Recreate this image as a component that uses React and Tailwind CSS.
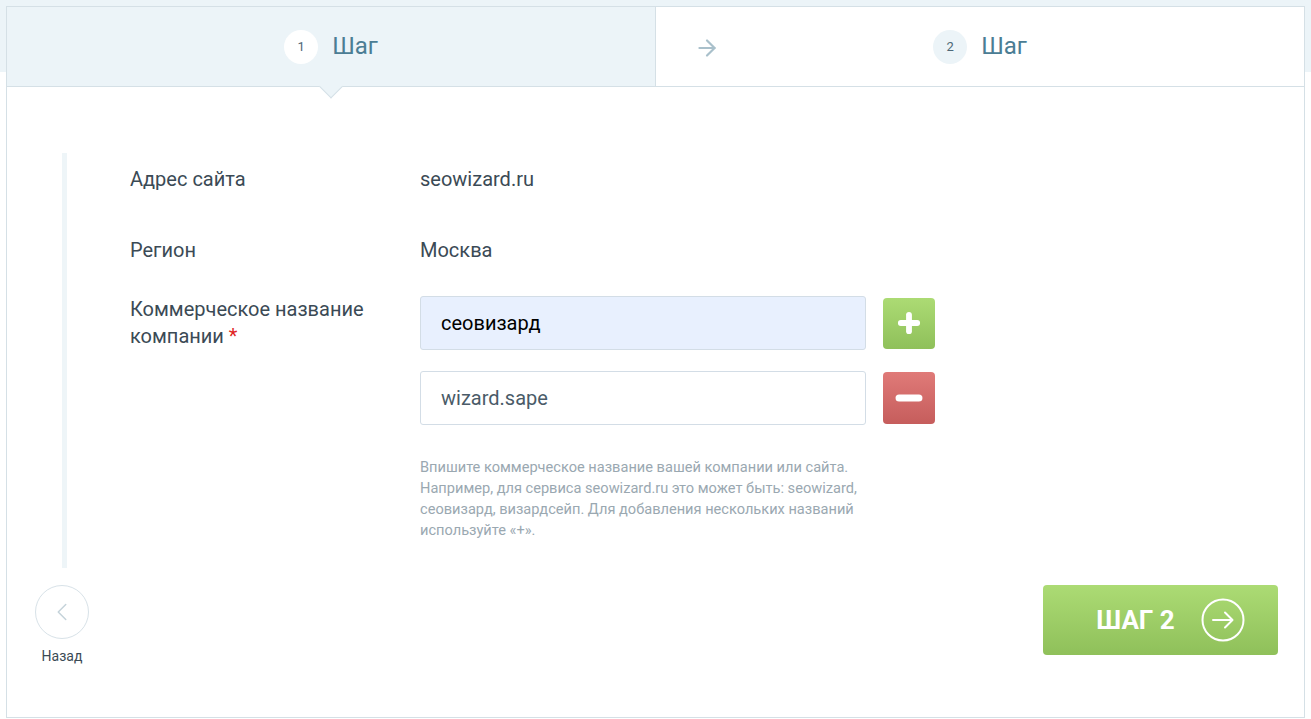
import { ArrowRight, ChevronLeft, Plus, Minus } from 'lucide-react';

const font = { fontFamily: 'Roboto, "Noto Sans", sans-serif' };

function StepTab({ num, active, arrow }) {
  return (
    <div
      className={`relative flex-1 flex items-center justify-center gap-[14px] ${
        active ? 'bg-[#ecf4f8]' : 'bg-white border-l border-[#d5e0e6]'
      }`}
    >
      {arrow && (
        <ArrowRight size={26} strokeWidth={2} className="absolute left-[38px] top-[28px] text-[#a9c0cb]" />
      )}
      <div
        className={`w-[34px] h-[34px] rounded-full flex items-center justify-center text-[13px] text-[#4d6877] ${
          active ? 'bg-white' : 'bg-[#ecf4f8]'
        }`}
      >
        {num}
      </div>
      <span className="text-[24px] text-[#4b7d94] leading-none pb-[1px]">Шаг</span>
      {active && (
        <div className="absolute left-1/2 -bottom-[9px] -translate-x-1/2 w-[17px] h-[17px] rotate-45 bg-[#ecf4f8] border-r border-b border-[#d5e0e6]" />
      )}
    </div>
  );
}

function Row({ label, children }) {
  return (
    <div className="flex items-center h-[52px]">
      <div className="w-[290px] text-[20px] leading-[27px] text-[#3b4a55]">{label}</div>
      <div className="text-[20px] text-[#3b4a55]">{children}</div>
    </div>
  );
}

export default function App() {
  return (
    <div
      style={font}
      className="min-h-[719px] pt-[6px] px-[6px] bg-[linear-gradient(to_bottom,#ecf4f8_72px,#ffffff_72px)]"
    >
      <div className="h-[712px] bg-white border border-[#d5e0e6] flex flex-col">
        <div className="h-[80px] flex border-b border-[#d5e0e6]">
          <StepTab num="1" active />
          <StepTab num="2" arrow />
        </div>

        <div className="mt-[66px] ml-[55px] h-[415px] border-l-[5px] border-[#eef5f8] pl-[63px]">
          <Row label="Адрес сайта">seowizard.ru</Row>
          <div className="mt-[19px]">
            <Row label="Регион">Москва</Row>
          </div>
          <div className="mt-[20px] flex items-start">
            <div className="w-[290px] text-[20px] leading-[27px] text-[#3b4a55]">
              Коммерческое название
              <br />
              компании <span className="text-[#e02424]">*</span>
            </div>
            <div className="flex flex-col">
              <div className="flex items-center gap-[17px]">
                <input
                  readOnly
                  value="сеовизард"
                  className="w-[446px] h-[54px] rounded-[3px] border border-[#d3dde6] bg-[#e8f0fe] px-[20px] text-[20px] text-black outline-none"
                />
                <button className="w-[52px] h-[51px] rounded-[4px] bg-[linear-gradient(to_bottom,#acdb74,#8fc05a)] flex items-center justify-center">
                  <Plus size={28} strokeWidth={5} className="text-white" />
                </button>
              </div>
              <div className="flex items-center gap-[17px] mt-[21px]">
                <input
                  readOnly
                  value="wizard.sape"
                  className="w-[446px] h-[54px] rounded-[3px] border border-[#d3dde6] bg-white px-[20px] text-[20px] text-[#4a5b68] outline-none"
                />
                <button className="w-[52px] h-[52px] rounded-[4px] bg-[linear-gradient(to_bottom,#e07a78,#c65d5c)] flex items-center justify-center">
                  <Minus size={34} strokeWidth={5} className="text-white" />
                </button>
              </div>
              <p className="mt-[32px] w-[480px] text-[14.6px] leading-[21px] text-[#9aa8b1]">
                Впишите коммерческое название вашей компании или сайта.
                <br />
                Например, для сервиса seowizard.ru это может быть: seowizard,
                <br />
                сеовизард, визардсейп. Для добавления нескольких названий
                <br />
                используйте «+».
              </p>
            </div>
          </div>
        </div>

        <div className="mt-[17px] flex justify-between items-start pl-[28px] pr-[26px]">
          <div className="flex flex-col items-center w-[54px]">
            <div className="w-[54px] h-[54px] rounded-full border border-[#d8e2e8] flex items-center justify-center">
              <ChevronLeft size={30} strokeWidth={1.2} className="text-[#c5d3da]" />
            </div>
            <span className="mt-[7px] text-[14px] text-[#3b4a55]">Назад</span>
          </div>
          <button className="w-[235px] h-[70px] rounded-[4px] bg-[linear-gradient(to_bottom,#acdb74,#8fc05a)] flex items-center justify-center gap-[26px] pl-[20px]">
            <span className="text-[26px] font-bold text-white">ШАГ 2</span>
            <svg width="44" height="44" viewBox="0 0 44 44" fill="none" stroke="white" strokeWidth="2">
              <circle cx="22" cy="22" r="20.5" />
              <path d="M12 22h19M24 14.5l7.5 7.5-7.5 7.5" strokeLinecap="round" strokeLinejoin="round" />
            </svg>
          </button>
        </div>
      </div>
    </div>
  );
}
